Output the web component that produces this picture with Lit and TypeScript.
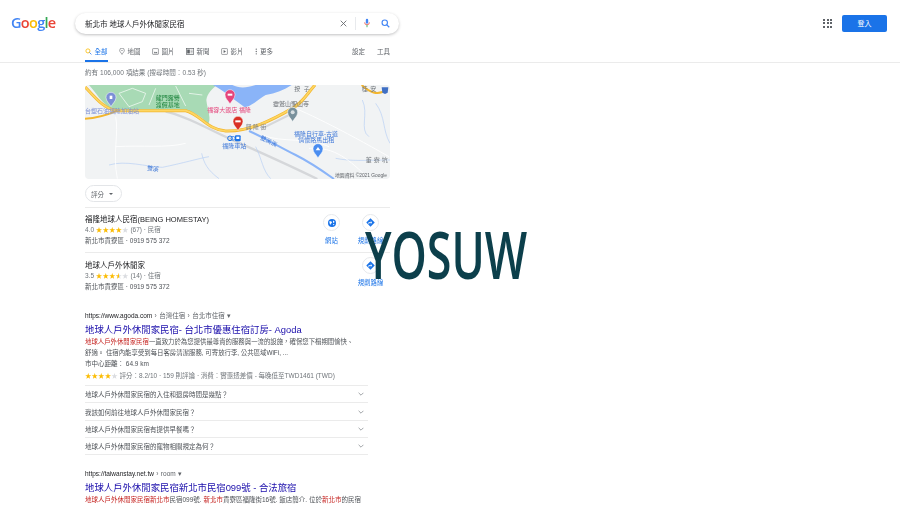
import { LitElement, html, css, svg } from "lit";
import { customElement } from "lit/decorators.js";

const pin = (x: number, y: number, c: string, inner = "") => svg`
  <g transform="translate(${x} ${y})">
    <path d="M0 22C-4 13 -15 6 -15 -6A15 15 0 0 1 15 -6C15 6 4 13 0 22Z" fill=${c} stroke="#fff" stroke-width="1.5"/>
    ${inner}
  </g>`;

const stars = (n: number, half = false) => html`<span class="stars">${"★".repeat(n)}${half ? html`<span class="half">★</span>` : ""}<span class="off">${"★".repeat(5 - n - (half ? 1 : 0))}</span></span>`;

const chev = html`<svg class="chev" viewBox="0 0 10 6"><path d="M1 1l4 4 4-4" fill="none" stroke="#70757a" stroke-width="1.100"/></svg>`;

const globe = html`<svg viewBox="0 0 16 16" width="8" height="8"><circle cx="8" cy="8" r="8" fill="#1a73e8"/><path d="M3 4l4 1 1 3-2 1-1 3-2-4zM10 3l3 2-1 3-2-1zM10 10l3 0-2 3z" fill="#fff"/></svg>`;
const dirs = html`<svg viewBox="0 0 16 16" width="9" height="9"><path d="M8 .5L15.500 8 8 15.500.5 8z" fill="#1a73e8"/><path d="M5 11V8h5M8.200 5.800L10.500 8l-2.300 2.200" fill="none" stroke="#fff" stroke-width="1.400"/></svg>`;

@customElement("app-root")
export class AppRoot extends LitElement {
  static styles = css`
    :host {
      display: block; width: 900px; height: 506px; overflow: hidden; position: relative;
      background: #fff; color: #4d5156;
      font-family: "Liberation Sans", "Noto Sans CJK TC", sans-serif;
      font-size: 7px;
    }
    .page { filter: blur(0.42px); }
    header { display: flex; align-items: center; height: 46px; box-sizing: border-box; padding: 0 13px 0 11px; }
    .logo { width: 64px; font: 600 14.5px/20px "Open Sans", sans-serif; letter-spacing: -0.7px; margin-top: -1px; }
    .b { color: #4285f4; } .r { color: #ea4335; } .y { color: #fbbc05; } .g { color: #34a853; }
    .search {
      width: 324px; height: 21px; box-sizing: border-box; border-radius: 11px; background: #fff;
      box-shadow: 0 1px 3px rgba(32,33,36,.28); display: flex; align-items: center;
      padding: 0 9px 0 10px; font-size: 7.5px; color: #202124;
    }
    .search .q { flex: 1; }
    .search svg { display: block; }
    .sep { width: 1px; height: 13px; background: #e8eaed; margin: 0 8.500px 0 7.500px; }
    .mic { margin-right: 11px; }
    .spacer { flex: 1; }
    .apps { width: 9px; height: 9px; margin-right: 10px; display: grid; grid-template-columns: repeat(3, 2px); gap: 1.5px; }
    .apps i { background: #5f6368; display: block; }
    .login {
      width: 45px; height: 17px; background: #1a73e8; color: #fff; border-radius: 2px;
      display: flex; align-items: center; justify-content: center; font-size: 7px;
    }
    nav {
      display: flex; height: 17px; box-sizing: border-box; padding-left: 85px; width: 900px;
      border-bottom: 1px solid #ebebeb; color: #5f6368; font-size: 6.5px;
    }
    .tab { display: flex; align-items: flex-start; gap: 2.5px; height: 16px; line-height: 11px; padding-top: 0; }
    .tab svg { margin-top: 2px; display: block; }
    .tab.on { color: #1a73e8; border-bottom: 2px solid #1a73e8; height: 14px; width: 23px; margin-right: 11px; }
    .tab.w { margin-right: 11.5px; }
    .tools { margin-left: 79px; display: flex; gap: 12px; line-height: 11px; }
    main { width: 305px; margin-left: 85px; }
    .stats { color: #70757a; font-size: 6.6px; line-height: 9px; padding-top: 5px; height: 17px; box-sizing: border-box; margin-bottom: 5px; }
    .map { display: block; width: 305px; height: 94px; border-radius: 4px; }
    .pill {
      display: inline-flex; align-items: center; gap: 5px; height: 17px; width: 37px; box-sizing: border-box;
      margin-top: 6px; border: 1px solid #e3e5e8; border-radius: 9px; padding-left: 5px; font-size: 6.5px; color: #5f6368;
    }
    .tri { width: 0; height: 0; border: 2px solid transparent; border-top: 2.5px solid #5f6368; border-bottom: 0; }
    .place { display: flex; height: 45px; box-sizing: border-box; border-top: 1px solid #ebebeb; padding-top: 6px; position: relative; }
    .place.first { margin-top: 5px; }
    .place.second { padding-top: 7px; }
    .place.second .acts { margin-top: -3px; }
    .place.second .circle { margin-bottom: 4px; }
    .ptxt { flex: 1; }
    .ptitle { font-size: 7.5px; line-height: 11px; color: #202124; }
    .pline { font-size: 6.5px; line-height: 10.5px; color: #70757a; white-space: nowrap; }
    .pline.dark { color: #4d5156; }
    .stars { color: #fbbc04; font-size: 6.5px; letter-spacing: 0.05px; }
    .off { color: #dadce0; }
    .half { background: linear-gradient(90deg, #fbbc04 50%, #dadce0 50%); -webkit-background-clip: text; background-clip: text; color: transparent; }
    .act { width: 39px; display: flex; flex-direction: column; align-items: center; color: #1a73e8; font-size: 6.4px; white-space: nowrap; }
    .circle { width: 17px; height: 17px; border: 0.5px solid #e6e8eb; border-radius: 50%; display: flex; align-items: center; justify-content: center; margin-bottom: 5px; box-sizing: border-box; }
    .acts { display: flex; }
    .r1 { margin-top: 14px; }
    .url { font-size: 6.5px; line-height: 9px; color: #202124; white-space: nowrap; }
    .url span { color: #5f6368; word-spacing: 0.6px; }
    .title { font-size: 9.4px; line-height: 14px; color: #1a0dab; margin-top: 3px; white-space: nowrap; }
    .snip { font-size: 6.4px; line-height: 10.6px; width: 295px; white-space: nowrap; }
    .em { color: #c5221f; }
    .rate { font-size: 6.5px; line-height: 12px; color: #70757a; white-space: nowrap; }
    .dist { color: #4d5156; }
    .paa { width: 283px; border-top: 1px solid #ebebeb; margin-top: 3px; }
    .row { display: flex; align-items: center; justify-content: space-between; height: 17.3px; box-sizing: border-box; border-bottom: 1px solid #ebebeb; font-size: 6.5px; color: #4d5156; padding-right: 4px; }
    .chev { width: 6px; height: 4px; display: block; }
    .r2 { margin-top: 14px; }
    .r2 .snip { font-size: 6.5px; }
    .wm {
      position: absolute; left: 365px; top: 208px; font: 600 65px/92px "Open Sans", sans-serif; color: #0c3f4b;
      transform: scaleX(0.69); transform-origin: left top; white-space: nowrap;
    }
  `;

  render() {
    return html`
      <div class="page">
        <header>
          <div class="logo"><span class="b">G</span><span class="r">o</span><span class="y">o</span><span class="b">g</span><span class="g">l</span><span class="r">e</span></div>
          <div class="search">
            <span class="q">新北市 地球人戶外休閒家民宿</span>
            <svg viewBox="0 0 10 10" width="7" height="7"><path d="M1 1l8 8M9 1l-8 8" stroke="#5f6368" stroke-width="1.200"/></svg>
            <div class="sep"></div>
            <svg class="mic" viewBox="0 0 10 14" width="6" height="10"><rect x="3" y="0" width="4" height="8" rx="2" fill="#4285f4"/><path d="M1 6a4 4 0 0 0 8 0" fill="none" stroke="#ea4335" stroke-width="1.200"/><rect x="4.300" y="10" width="1.400" height="4" fill="#34a853"/></svg>
            <svg viewBox="0 0 12 12" width="9" height="9"><circle cx="5" cy="5" r="3.600" fill="none" stroke="#4285f4" stroke-width="1.500"/><path d="M7.800 7.800L11 11" stroke="#4285f4" stroke-width="1.700"/></svg>
          </div>
          <div class="spacer"></div>
          <div class="apps">${Array.from({ length: 9 }, () => html`<i></i>`)}</div>
          <div class="login">登入</div>
        </header>
        <nav>
          <div class="tab on"><svg viewBox="0 0 12 12" width="7" height="7"><circle cx="5" cy="5" r="3.500" fill="none" stroke="#fbbc04" stroke-width="1.400"/><path d="M7.500 7.500L11 11" stroke="#4285f4" stroke-width="1.500"/></svg>全部</div>
          <div class="tab w"><svg viewBox="0 0 10 12" width="6" height="7"><path d="M5 11C3.500 8 1 6.500 1 4.200A4 4 0 0 1 9 4.200C9 6.500 6.500 8 5 11Z" fill="none" stroke="#5f6368"/><circle cx="5" cy="4.300" r="1" fill="#5f6368"/></svg><span>地圖</span></div>
          <div class="tab w"><svg viewBox="0 0 12 12" width="7" height="7"><rect x="1" y="1" width="10" height="10" rx="1" fill="none" stroke="#5f6368"/><path d="M3 9l2-3 1.500 2 1.500-1.500L9.500 9z" fill="#5f6368"/></svg><span>圖片</span></div>
          <div class="tab w"><svg viewBox="0 0 12 10" width="8" height="7"><rect x=".5" y=".5" width="11" height="9" fill="none" stroke="#5f6368"/><path d="M2 2.500h3.500v5H2zM7 3h3M7 5h3M7 7h3" fill="#5f6368" stroke="#5f6368" stroke-width=".7"/></svg><span>新聞</span></div>
          <div class="tab w"><svg viewBox="0 0 12 12" width="7" height="7"><rect x="1" y="1" width="10" height="10" rx="1" fill="none" stroke="#5f6368"/><path d="M4.500 3.500l4 2.500-4 2.500z" fill="#5f6368"/></svg><span>影片</span></div>
          <div class="tab"><svg viewBox="0 0 4 12" width="2.500" height="7"><circle cx="2" cy="2" r="1.100" fill="#5f6368"/><circle cx="2" cy="6" r="1.100" fill="#5f6368"/><circle cx="2" cy="10" r="1.100" fill="#5f6368"/></svg><span>更多</span></div>
          <div class="tools"><span>設定</span><span>工具</span></div>
        </nav>
        <main>
          <div class="stats">約有 106,000 項結果 (搜尋時間：0.53 秒)</div>
          ${this.renderMap()}
          <div class="pill">評分 <span class="tri"></span></div>
          <div class="place first">
            <div class="ptxt">
              <div class="ptitle">福隆地球人民宿(BEING HOMESTAY)</div>
              <div class="pline">4.0 ${stars(4)} (67) · 民宿</div>
              <div class="pline dark">新北市貢寮區 · 0919 575 372</div>
            </div>
            <div class="acts">
              <div class="act"><div class="circle">${globe}</div>網站</div>
              <div class="act"><div class="circle">${dirs}</div>規劃路線</div>
            </div>
          </div>
          <div class="place second">
            <div class="ptxt">
              <div class="ptitle">地球人戶外休閒家</div>
              <div class="pline">3.5 ${stars(3, true)} (14) · 住宿</div>
              <div class="pline dark">新北市貢寮區 · 0919 575 372</div>
            </div>
            <div class="acts">
              <div class="act"><div class="circle">${dirs}</div>規劃路線</div>
            </div>
          </div>
          <div class="result r1">
            <div class="url">https://www.agoda.com<span> › 台灣住宿 › 台北市住宿 ▾</span></div>
            <div class="title">地球人戶外休閒家民宿- 台北市優惠住宿訂房- Agoda</div>
            <div class="snip"><span class="em">地球人戶外休閒家民宿</span>一直致力於為您提供最尊貴的服務與一流的設施，確保您下榻期間愉快、<br>舒適。 住宿內能享受到每日客房清潔服務, 可寄放行李, 公共區域WiFi, ...</div>
            <div class="rate dist">市中心距離： 64.9 km</div>
            <div class="rate">${stars(4)} 評分：8.2/10 · 159 則評論 · 消費：實惠透差價 - 每晚低至TWD1461 (TWD)</div>
            <div class="paa">
              <div class="row">地球人戶外休閒家民宿的入住和退房時間是幾點？${chev}</div>
              <div class="row">我該如何前往地球人戶外休閒家民宿？${chev}</div>
              <div class="row">地球人戶外休閒家民宿有提供早餐嗎？${chev}</div>
              <div class="row">地球人戶外休閒家民宿的寵物相關規定為何？${chev}</div>
            </div>
          </div>
          <div class="result r2">
            <div class="url">https://taiwanstay.net.tw<span> › room ▾</span></div>
            <div class="title">地球人戶外休閒家民宿新北市民宿099號 - 合法旅宿</div>
            <div class="snip"><span class="em">地球人戶外休閒家民宿新北市</span>民宿099號. <span class="em">新北市</span>貢寮區福隆街16號. 飯店簡介. 位於<span class="em">新北市</span>的民宿</div>
          </div>
        </main>
      </div>
      <div class="wm">YOSUW</div>
    `;
  }

  renderMap() {
    const t = "font-family:'Liberation Sans','Noto Sans CJK TC',sans-serif";
    return html`<svg class="map" viewBox="28 15 915 282" style=${t}>
      <rect x="28" y="15" width="915" height="282" fill="#f1f3f4"/>
      <path d="M40 15C70 50 90 85 120 92L335 92C365 100 385 115 395 135C410 120 395 90 392 60C395 40 410 25 425 15Z" fill="#a8dab5"/>
      <path d="M130 40l40-15 40 15-10 25-40 15zM240 25l-20 50M300 18l30 60M340 40l40 5" fill="none" stroke="#fff" stroke-width="2"/>
      <path d="M412 15C440 30 470 55 505 80C520 85 545 60 570 45C600 40 625 30 648 15Z" fill="#8ab4f8"/>
      <path d="M470 15C490 25 510 25 540 15Z" fill="#f1f3f4"/>
      <path d="M270 95C340 110 400 150 460 175C550 215 650 260 725 297" fill="none" stroke="#d5d7da" stroke-width="7"/>
      <path d="M640 105C620 115 590 130 560 145" fill="none" stroke="#d5d7da" stroke-width="6"/>
      <path d="M28 20C60 55 90 92 130 92L330 92C370 100 395 150 450 153C520 155 590 120 650 85C680 70 695 40 718 15" fill="none" stroke="#f3b62e" stroke-width="9"/>
      <path d="M28 20C60 55 90 92 130 92L330 92C370 100 395 150 450 153C520 155 590 120 650 85C680 70 695 40 718 15" fill="none" stroke="#fdd663" stroke-width="5"/>
      <path d="M28 116C60 115 95 105 125 92" fill="none" stroke="#f3b62e" stroke-width="6"/>
      <path d="M858 15C880 35 905 50 935 28" fill="none" stroke="#f3b62e" stroke-width="6"/>
      <path d="M520 153C560 170 600 195 660 225C690 240 730 265 775 297" fill="none" stroke="#8ab4f8" stroke-width="6"/>
      <path d="M100 255C150 240 210 260 260 262C320 250 370 235 400 230M378 220C385 250 395 270 430 296M540 200C560 240 560 270 585 296M860 60C880 100 850 150 880 170M900 70C930 110 920 150 943 190M780 235C830 245 870 240 943 240" fill="none" stroke="#b6cff5" stroke-width="2"/>
      <path d="M120 110C130 160 110 220 125 296M120 200C200 195 270 205 330 190M560 165C620 190 700 170 760 200M700 205C780 200 820 240 880 296M620 70C680 90 800 150 940 230" fill="none" stroke="#fff" stroke-width="2.500"/>
      ${pin(106, 58, "#7b8fd6", svg`<rect x="-4" y="-11" width="8" height="10" fill="#fff"/>`)}
      ${pin(463, 50, "#e5457b", svg`<rect x="-7" y="-9" width="14" height="6" fill="#fff"/>`)}
      ${pin(651, 103, "#78909c", svg`<circle cx="0" cy="-6" r="6" fill="#fff" opacity=".7"/>`)}
      ${pin(727, 212, "#4a8df0", svg`<path d="M-7 -1L0 -11L7 -1Z" fill="#fff"/>`)}
      ${pin(487, 130, "#d93025", svg`<rect x="-8" y="-9" width="16" height="6" fill="#fff"/>`)}
      <path d="M918 22h20l-2 16-8 4-8-4z" fill="#3f6fc4"/>
      <rect x="478" y="166" width="17" height="18" rx="3" fill="#1a73e8"/><rect x="482" y="170" width="9" height="7" fill="#fff"/>
      <circle cx="463" cy="175" r="7" fill="none" stroke="#1a73e8" stroke-width="3"/><circle cx="472" cy="175" r="6" fill="none" stroke="#1a73e8" stroke-width="2"/>
      <g font-size="18">
        <text x="28" y="98" fill="#7b8fd6">台塑石油福隆加油站</text>
        <text x="395" y="96" fill="#e5457b">福容大飯店 福隆</text>
        <text x="440" y="203" fill="#3f78d8">福隆車站</text>
        <text x="592" y="78" fill="#5f6368">靈鷲山聖山寺</text>
        <text x="655" y="168" fill="#3f78d8">福隆自行車-古道</text>
        <text x="668" y="187" fill="#3f78d8">情懷路馬出租</text>
        <text x="240" y="60" fill="#188038">龍門露營</text>
        <text x="240" y="81" fill="#188038">渡假基地</text>
        <text x="213" y="270" fill="#3f78d8" transform="rotate(8 213 270)">雙溪</text>
        <text x="552" y="178" fill="#3f78d8" transform="rotate(25 552 178)">雙溪溪</text>
        <text x="510" y="148" fill="#80868b" letter-spacing="4">興隆街</text>
        <text x="656" y="33" fill="#70757a" letter-spacing="10">按子</text>
        <text x="858" y="33" fill="#70757a" letter-spacing="8">桂安</text>
        <text x="870" y="247" fill="#70757a" letter-spacing="6">董寮坑</text>
        <text x="778" y="290" fill="#5f6368" font-size="14.500">地圖資料 ©2021 Google</text>
      </g>
    </svg>`;
  }
}
